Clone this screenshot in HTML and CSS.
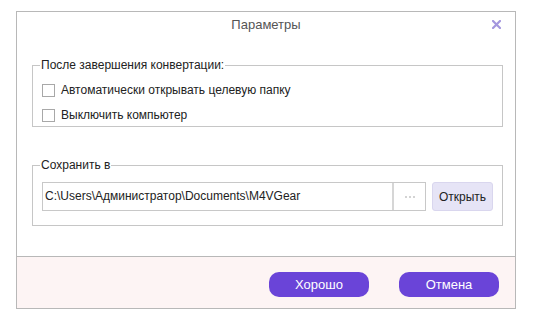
FILE: index.html
```html
<!DOCTYPE html>
<html lang="ru">
<head>
<meta charset="UTF-8">
<title>Параметры</title>
<link rel="stylesheet" href="styles.css">
</head>
<body>
<div class="dialog">
	<div class="dlg-head">
		<span class="dlg-title">Параметры</span>
		<svg class="dlg-close" width="9" height="9" viewBox="0 0 9 9">
			<path d="M1 1 L8 8 M8 1 L1 8" stroke="#a497de" stroke-width="2.2" stroke-linecap="square" fill="none"/>
		</svg>
	</div>

	<div class="dlg-body">
		<fieldset class="group group-after">
			<legend>После завершения конвертации:</legend>
			<label class="check"><span class="box"></span>Автоматически открывать целевую папку</label>
			<label class="check"><span class="box"></span>Выключить компьютер</label>
		</fieldset>

		<fieldset class="group group-save">
			<legend>Сохранить в</legend>
			<div class="path-row">
				<div class="path-box">
					<span class="path-text">C:\Users\Администратор\Documents\M4VGear</span>
					<span class="browse"><i></i><i></i><i></i></span>
				</div>
				<button class="open-btn">Открыть</button>
			</div>
		</fieldset>
	</div>

	<div class="dlg-foot">
		<button class="pill">Хорошо</button>
		<button class="pill">Отмена</button>
	</div>
</div>
</body>
</html>
```

FILE: styles.css
```css
html, body {
	margin: 0;
	padding: 0;
	background: #ffffff;
}
body {
	font-family: "Liberation Sans", Arial, sans-serif;
	font-size: 12px;
	color: #222222;
}
.dialog {
	margin: 11px 0 0 16px;
	width: 498px;
	border: 1px solid #b8b8b8;
	background: #ffffff;
}
.dlg-head {
	height: 40px;
	display: flex;
	align-items: flex-start;
	justify-content: center;
	position: relative;
}
.dlg-title {
	font-size: 13px;
	line-height: 15px;
	color: #555555;
	margin-top: 5px;
}
.dlg-close {
	position: absolute;
	right: 14px;
	top: 8px;
}
.dlg-body {
	padding: 6px 12px 0 15px;
}
.group {
	margin: 0;
	border: 1px solid #c6c6c6;
	padding: 0 9px;
}
.group legend {
	padding: 0 1px;
	margin-left: -2px;
	line-height: 14px;
	color: #222222;
}
.group-after {
	padding-top: 12px;
	padding-bottom: 4px;
}
.group-save {
	margin-top: 31px;
	padding-top: 10px;
	padding-bottom: 14px;
}
.check {
	display: flex;
	align-items: center;
	height: 13px;
	margin-bottom: 12px;
	line-height: 13px;
}
.check:last-child {
	margin-bottom: 0;
}
.box {
	width: 11px;
	height: 11px;
	border: 1px solid #a8a8a8;
	background: #ffffff;
	margin-right: 6px;
}
.path-row {
	display: flex;
	align-items: center;
	gap: 6px;
}
.path-box {
	flex: 1;
	display: flex;
	height: 27px;
	border: 1px solid #c8c8c8;
	background: #ffffff;
}
.path-text {
	flex: 1;
	padding-left: 2px;
	line-height: 27px;
	white-space: nowrap;
	overflow: hidden;
}
.browse {
	width: 31px;
	border-left: 2px solid #d6d6d6;
	display: flex;
	align-items: center;
	justify-content: center;
	gap: 2px;
}
.browse i {
	width: 2px;
	height: 2px;
	border-radius: 1px;
	background: #c4c4c4;
}
.open-btn {
	width: 61px;
	height: 29px;
	border: 1px solid #d9d6ee;
	border-radius: 3px;
	background: #e6e4f6;
	font-family: "Liberation Sans", Arial, sans-serif;
	font-size: 12px;
	color: #222222;
	padding: 0;
}
.dlg-foot {
	margin-top: 30px;
	border-top: 1px solid #b8b8b8;
	background: #fdf4f4;
	height: 51px;
	display: flex;
	justify-content: flex-end;
	align-items: flex-start;
	gap: 30px;
	padding-right: 16px;
}
.pill {
	margin-top: 15px;
	width: 100px;
	height: 25px;
	border: none;
	border-radius: 10px;
	background: #6a44d8;
	color: #ffffff;
	font-family: "Liberation Sans", Arial, sans-serif;
	font-size: 13px;
	padding: 0;
}
```
